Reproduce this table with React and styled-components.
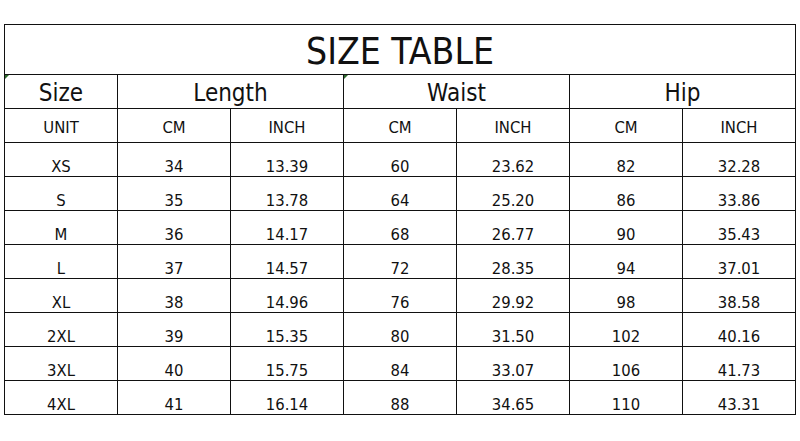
import React from "react";
import styled, { createGlobalStyle } from "styled-components";

const Global = createGlobalStyle`
  html, body { margin: 0; padding: 0; background: #fff; }
  body { width: 800px; height: 441px; overflow: hidden; }
`;

const Page = styled.div`
  padding: 24px 0 0 4px;
  font-family: "DejaVu Sans Condensed", "DejaVu Sans", sans-serif;
  font-stretch: condensed;
  color: #111;
`;

const Grid = styled.div`
  display: grid;
  grid-template-columns: repeat(7, 113px);
  grid-template-rows: 50px 34px 34px repeat(8, 34px);
  width: max-content;
  border-left: 1px solid #111;
  border-top: 1px solid #111;
`;

const Cell = styled.div`
  position: relative;
  grid-column: span ${(p) => p.$span || 1};
  border-right: 1px solid #111;
  border-bottom: 1px solid #111;
  display: flex;
  justify-content: center;
  align-items: ${(p) => (p.$bottom ? "flex-end" : "center")};
  padding-top: ${(p) => p.$pt || 0}px;
  padding-bottom: ${(p) => p.$pb || 0}px;
  font-size: ${(p) => p.$size}px;
  line-height: normal;
  white-space: nowrap;
`;

const Mark = styled.span`
  position: absolute;
  left: 0;
  top: 0;
  width: 0;
  height: 0;
  border-top: 4px solid #2f6b2f;
  border-right: 4px solid transparent;
`;

const rows = [
  ["XS", 34, "13.39", 60, "23.62", 82, "32.28"],
  ["S", 35, "13.78", 64, "25.20", 86, "33.86"],
  ["M", 36, "14.17", 68, "26.77", 90, "35.43"],
  ["L", 37, "14.57", 72, "28.35", 94, "37.01"],
  ["XL", 38, "14.96", 76, "29.92", 98, "38.58"],
  ["2XL", 39, "15.35", 80, "31.50", 102, "40.16"],
  ["3XL", 40, "15.75", 84, "33.07", 106, "41.73"],
  ["4XL", 41, "16.14", 88, "34.65", 110, "43.31"],
];

const units = ["UNIT", "CM", "INCH", "CM", "INCH", "CM", "INCH"];

export default function App() {
  return (
    <Page>
      <Global />
      <Grid>
        <Cell $span={7} $size={37} $pt={4}>SIZE TABLE</Cell>
        <Cell $size={24} $pt={3}><Mark />Size</Cell>
        <Cell $span={2} $size={24} $pt={3}>Length</Cell>
        <Cell $span={2} $size={24} $pt={3}><Mark />Waist</Cell>
        <Cell $span={2} $size={24} $pt={3}>Hip</Cell>
        {units.map((u, i) => (
          <Cell key={"u" + i} $size={16.5} $pt={3}>{u}</Cell>
        ))}
        {rows.map((r, ri) =>
          r.map((v, ci) => (
            <Cell key={ri + "-" + ci} $size={16.5} $bottom>{v}</Cell>
          ))
        )}
      </Grid>
    </Page>
  );
}
